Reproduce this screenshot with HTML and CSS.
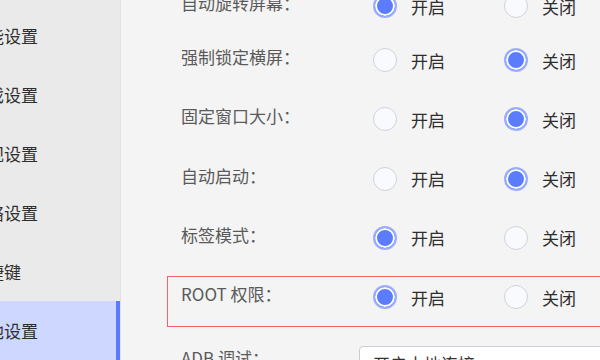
FILE: index.html
```html
<!DOCTYPE html>
<html lang="zh-CN">
<head>
  <meta charset="UTF-8">
  <meta name="viewport" content="width=device-width, initial-scale=1.0">
  <title>其他设置</title>
  <link rel="stylesheet" href="styles.css">
</head>
<body>
  <div class="app">
    <aside class="sidebar">
      <div class="nav-item">性能设置</div>
      <div class="nav-item">游戏设置</div>
      <div class="nav-item">常规设置</div>
      <div class="nav-item">网络设置</div>
      <div class="nav-item">快捷键</div>
      <div class="nav-item active">其他设置</div>
    </aside>

    <main class="content">
      <div class="row first">
        <span class="label">自动旋转屏幕：</span>
        <div class="options">
          <label class="option"><span class="radio checked"></span>开启</label>
          <label class="option"><span class="radio"></span>关闭</label>
        </div>
      </div>

      <div class="row">
        <span class="label">强制锁定横屏：</span>
        <div class="options">
          <label class="option"><span class="radio"></span>开启</label>
          <label class="option"><span class="radio checked"></span>关闭</label>
        </div>
      </div>

      <div class="row">
        <span class="label">固定窗口大小：</span>
        <div class="options">
          <label class="option"><span class="radio"></span>开启</label>
          <label class="option"><span class="radio checked"></span>关闭</label>
        </div>
      </div>

      <div class="row">
        <span class="label">自动启动：</span>
        <div class="options">
          <label class="option"><span class="radio"></span>开启</label>
          <label class="option"><span class="radio checked"></span>关闭</label>
        </div>
      </div>

      <div class="row">
        <span class="label">标签模式：</span>
        <div class="options">
          <label class="option"><span class="radio checked"></span>开启</label>
          <label class="option"><span class="radio"></span>关闭</label>
        </div>
      </div>

      <div class="row highlight">
        <span class="label">ROOT 权限：</span>
        <div class="options">
          <label class="option"><span class="radio checked"></span>开启</label>
          <label class="option"><span class="radio"></span>关闭</label>
        </div>
      </div>

      <div class="row adb">
        <span class="label">ADB 调试：</span>
        <div class="select">开启本地连接</div>
      </div>
    </main>
  </div>
</body>
</html>
```

FILE: styles.css
```css
body {
  margin: 0;
  background-color: #f4f4f4;
  font-family: "Noto Sans CJK SC", "Noto Sans", sans-serif;
  color: #333;
  overflow: hidden;
}
.app {
  display: flex;
  height: 360px;
  margin-left: -60px;
}
.sidebar {
  width: 180px;
  flex-shrink: 0;
  background-color: #eaeaea;
  border-right: 1px solid #e2e2e2;
  padding-top: 6px;
}
.nav-item {
  height: 59px;
  padding-left: 30px;
  display: flex;
  align-items: center;
  font-size: 17px;
  color: #2e2e2e;
  white-space: nowrap;
}
.nav-item.active {
  background-color: #cdd7ff;
  border-right: 4px solid #5b7bff;
}
.content {
  flex: 1;
  margin-top: -14px;
  padding-left: 47px;
  min-width: 0;
}
.row {
  display: flex;
  align-items: flex-start;
  width: 560px;
  height: 49px;
  margin-bottom: 10.25px;
  padding-left: 13px;
}
.row.first {
  margin-bottom: 5px;
}
.row.highlight {
  outline: 1px solid #f56464;
}
.label {
  width: 192px;
  flex-shrink: 0;
  line-height: 34px;
  font-size: 17px;
  color: #5a5a5a;
  white-space: nowrap;
}
.row.adb .label {
  padding-top: 5px;
}
.options {
  display: flex;
  height: 40px;
  align-items: center;
}
.option {
  width: 131px;
  display: flex;
  align-items: center;
  gap: 14px;
  font-size: 17px;
  color: #2e2e2e;
}
.radio {
  width: 24px;
  height: 24px;
  box-sizing: border-box;
  border-radius: 50%;
  border: 1px solid #cfd2dc;
  background-color: #f9fafd;
}
.radio.checked {
  border: 2px solid #9aacff;
  background-color: #5b7cff;
  box-shadow: inset 0 0 0 2px #fff;
}
.select {
  margin-top: 10px;
  margin-left: -14px;
  width: 300px;
  height: 36px;
  padding-left: 13px;
  box-sizing: border-box;
  background-color: #fff;
  border: 1px solid #c9cdd6;
  border-radius: 4px;
  line-height: 34px;
  font-size: 17px;
  color: #333;
}
```
